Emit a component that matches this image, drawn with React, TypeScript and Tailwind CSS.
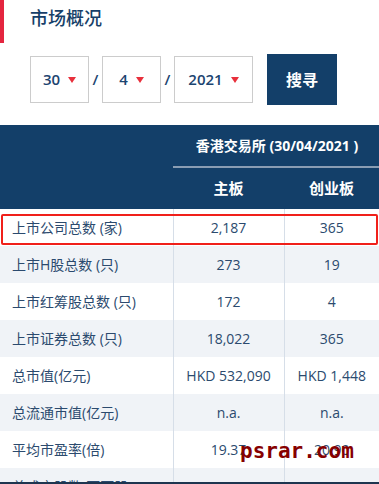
import { useState } from 'react'

const rows = [
  { label: '上市公司总数 (家)', main: '2,187', gem: '365', hl: true },
  { label: '上市H股总数 (只)', main: '273', gem: '19' },
  { label: '上市红筹股总数 (只)', main: '172', gem: '4' },
  { label: '上市证券总数 (只)', main: '18,022', gem: '365' },
  { label: '总市值(亿元)', main: 'HKD 532,090', gem: 'HKD 1,448' },
  { label: '总流通市值(亿元)', main: 'n.a.', gem: 'n.a.' },
  { label: '平均市盈率(倍)', main: '19.37', gem: '20.90' },
  { label: '总成交股数(百万股)', main: '253,123', gem: '542' },
]

function DateSelect({ value, width }: { value: string; width: string }) {
  return (
    <div
      className={`${width} h-[47px] border border-[#cccccc] flex items-center justify-center gap-[8px] text-[15px] font-semibold text-[#1c4470]`}
    >
      <span>{value}</span>
      <span className="w-0 h-0 border-l-[4px] border-r-[4px] border-t-[6px] border-l-transparent border-r-transparent border-t-[#e8303c]" />
    </div>
  )
}

export default function App() {
  const [day] = useState('30')

  return (
    <div
      className="relative w-[379px] h-[484px] overflow-hidden bg-white"
      style={{ fontFamily: '"Open Sans", "Noto Sans CJK SC", sans-serif' }}
    >
      <div className="flex items-center h-[43px] border-l-[4px] border-[#e4253f] pl-[26px]">
        <h1 className="text-[18px] font-medium text-[#173f69] -mt-[6px]">市场概况</h1>
      </div>

      <div className="flex items-center pl-[30px] mt-[11px] h-[51px]">
        <DateSelect value={day} width="w-[59px]" />
        <span className="w-[13px] text-center text-[15px] font-semibold text-[#1c4470]">/</span>
        <DateSelect value="4" width="w-[59px]" />
        <span className="w-[13px] text-center text-[15px] font-semibold text-[#1c4470]">/</span>
        <DateSelect value="2021" width="w-[79px]" />
        <button className="ml-[14px] w-[70px] h-[51px] bg-[#133f69] text-white text-[16px] font-bold">
          搜寻
        </button>
      </div>

      <table className="mt-[20px] w-[379px] border-collapse table-fixed">
        <colgroup>
          <col className="w-[173px]" />
          <col className="w-[111px]" />
          <col className="w-[95px]" />
        </colgroup>
        <thead className="bg-[#133f69] text-white font-bold">
          <tr className="h-[42px]">
            <th />
            <th colSpan={2} className="text-[14px] font-bold border-b-[2px] border-[#8a9db3] pl-[2px]">
              香港交易所 (30/04/2021 )
            </th>
          </tr>
          <tr className="h-[42px]">
            <th />
            <th className="text-[15px] font-bold">主板</th>
            <th className="text-[15px] font-bold">创业板</th>
          </tr>
        </thead>
        <tbody className="text-[14px] text-[#2b4a6e]">
          {rows.map((r, i) => (
            <tr key={r.label} className={`h-[37px] ${i % 2 === 1 ? 'bg-[#f0f3f7]' : 'bg-white'}`}>
              <td className="pl-[12px] whitespace-nowrap">{r.label}</td>
              <td className="text-center border-l border-[#d6dee8] whitespace-nowrap">{r.main}</td>
              <td className="text-center border-l border-[#d6dee8] whitespace-nowrap">{r.gem}</td>
            </tr>
          ))}
        </tbody>
      </table>

      {/* highlight on the first data row */}
      <div className="absolute left-[1px] top-[214px] w-[377px] h-[31px] border-[2px] border-[#f0201a] rounded-[2px]" />

      {/* watermark */}
      <div
        className="absolute left-[240px] top-[436px] text-[21px] font-bold text-[#860000]"
        style={{ fontFamily: '"DejaVu Sans Mono", monospace' }}
      >
        psrar.com
      </div>

      <div className="absolute left-0 bottom-0 w-full h-[2px] bg-[#1e3550]" />
    </div>
  )
}
